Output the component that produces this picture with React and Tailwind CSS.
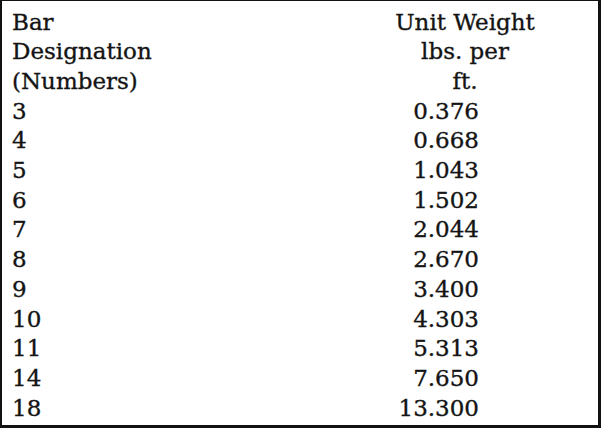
const rows = [
  ["3", "0.376"],
  ["4", "0.668"],
  ["5", "1.043"],
  ["6", "1.502"],
  ["7", "2.044"],
  ["8", "2.670"],
  ["9", "3.400"],
  ["10", "4.303"],
  ["11", "5.313"],
  ["14", "7.650"],
  ["18", "13.300"],
];

export default function App() {
  return (
    <div className="w-[602px] h-[428px] bg-white">
      <div
        className="w-[601px] h-[428px] border-t border-l-2 border-r-[3px] border-b-[3px] border-[#111] pt-[6.5px] text-[23px] leading-[29.7px] text-[#141414] [-webkit-text-stroke:0.35px_#141414]"
        style={{ fontFamily: '"DejaVu Serif", serif' }}
      >
        <div className="grid grid-cols-[346px_234px]">
          <div className="pl-[10px]">
            <div>Bar</div>
            <div>Designation</div>
            <div>(Numbers)</div>
          </div>
          <div className="text-center">
            <div>Unit Weight</div>
            <div>lbs. per</div>
            <div>ft.</div>
          </div>
          {rows.map(([bar, weight]) => (
            <div key={bar} className="contents">
              <div className="pl-[10px]">{bar}</div>
              <div className="text-right pr-[103px]">{weight}</div>
            </div>
          ))}
        </div>
      </div>
    </div>
  );
}
